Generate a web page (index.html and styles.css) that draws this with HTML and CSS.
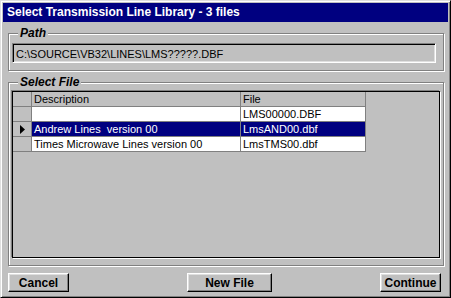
FILE: index.html
```html
<!DOCTYPE html>
<html lang="en">
<head>
<meta charset="UTF-8">
<title>Select Transmission Line Library</title>
<link rel="stylesheet" href="styles.css">
</head>
<body>
<div class="window">
  <div class="titlebar">Select Transmission Line Library - 3 files</div>

  <div class="content">
    <!-- path of the library files -->
    <fieldset class="group path-group">
      <legend>Path</legend>
      <div class="textbox">C:\SOURCE\VB32\LINES\LMS?????.DBF</div>
    </fieldset>

    <!-- file list -->
    <fieldset class="group file-group">
      <legend>Select File</legend>
      <div class="grid">
        <table>
          <tr class="head">
            <td class="sel"></td>
            <td class="desc">Description</td>
            <td class="file">File</td>
          </tr>
          <tr>
            <td class="sel"></td>
            <td class="desc"></td>
            <td class="file">LMS00000.DBF</td>
          </tr>
          <tr class="current">
            <td class="sel"><svg width="5" height="9" viewBox="0 0 5 9"><polygon points="0,0 5,4.5 0,9" fill="#000"/></svg></td>
            <td class="desc">Andrew Lines&nbsp; version 00</td>
            <td class="file">LmsAND00.dbf</td>
          </tr>
          <tr>
            <td class="sel"></td>
            <td class="desc">Times Microwave Lines version 00</td>
            <td class="file">LmsTMS00.dbf</td>
          </tr>
        </table>
      </div>
    </fieldset>

    <div class="buttons">
      <button class="btn">Cancel</button>
      <button class="btn btn-new">New File</button>
      <button class="btn btn-continue">Continue</button>
    </div>
  </div>
</div>
</body>
</html>
```

FILE: styles.css
```css
html,body{margin:0;padding:0;background:#c0c0c0;}
body{font-family:"Liberation Sans", Arial, sans-serif;font-size:11px;color:#000;}

.window{
  width:451px;height:298px;box-sizing:border-box;
  background:#c0c0c0;
  border:1px solid;border-color:#dfdfdf #000 #000 #dfdfdf;
  box-shadow:inset 1px 1px #fff, inset -1px -1px #808080;
  padding:2px 2px 2px 2px;
}
.titlebar{
  background:#000080;color:#fff;
  height:19px;line-height:19px;
  padding-left:4px;
  font-weight:bold;font-size:12px;
}

.content{padding:4px 4px 0 5px;}

.group{
  margin:0;min-width:0;
  border:1px solid #808080;
  box-shadow:inset 1px 1px #fff, 1px 1px #fff;
}
.group legend{
  margin-left:6px;padding:0 2px;
  background:#c0c0c0;
  font-size:12px;font-weight:bold;font-style:italic;
  line-height:15px;
}
.path-group{padding:2px 0 7px 3px;}
.file-group{margin-top:4px;padding:1px 0 7px 3px;}

.textbox{
  width:424px;height:20px;box-sizing:border-box;
  border:1px solid;border-color:#808080 #fff #fff #808080;
  box-shadow:inset 1px 1px #000, inset -1px -1px #dfdfdf;
  padding:1px 0 0 3px;
  line-height:18px;
}

.grid{
  width:428px;height:167px;box-sizing:border-box;
  border:1px solid #000;
  box-shadow:-1px -1px #808080, 1px 1px #fff;
}
.grid table{border-collapse:separate;border-spacing:0;}
.grid td{
  height:14px;padding:0 0 0 2px;
  border-right:1px solid #808080;border-bottom:1px solid #808080;
  background:#fff;white-space:nowrap;line-height:14px;
  box-sizing:content-box;
}
.grid td.sel{width:18px;padding:0;background:#c0c0c0;text-align:center;}
.grid td.sel svg{display:block;margin:1px auto 0 auto;}
.grid td.desc{width:206px;}
.grid td.file{width:122px;}
.grid .head td{background:#c0c0c0;}
.grid .current td.desc,.grid .current td.file{background:#000080;color:#fff;}

.buttons{display:flex;margin-top:7px;padding-right:3px;}
.btn{
  width:61px;height:19px;box-sizing:border-box;
  margin:0;padding:0;
  background:#c0c0c0;
  border:1px solid;border-color:#fff #000 #000 #fff;
  box-shadow:inset -1px -1px #808080, inset 1px 1px #dfdfdf;
  font-family:"Liberation Sans", Arial, sans-serif;
  font-size:12px;font-weight:bold;color:#000;
}
.btn-new{width:85px;margin-left:118px;}
.btn-continue{margin-left:auto;}
```
